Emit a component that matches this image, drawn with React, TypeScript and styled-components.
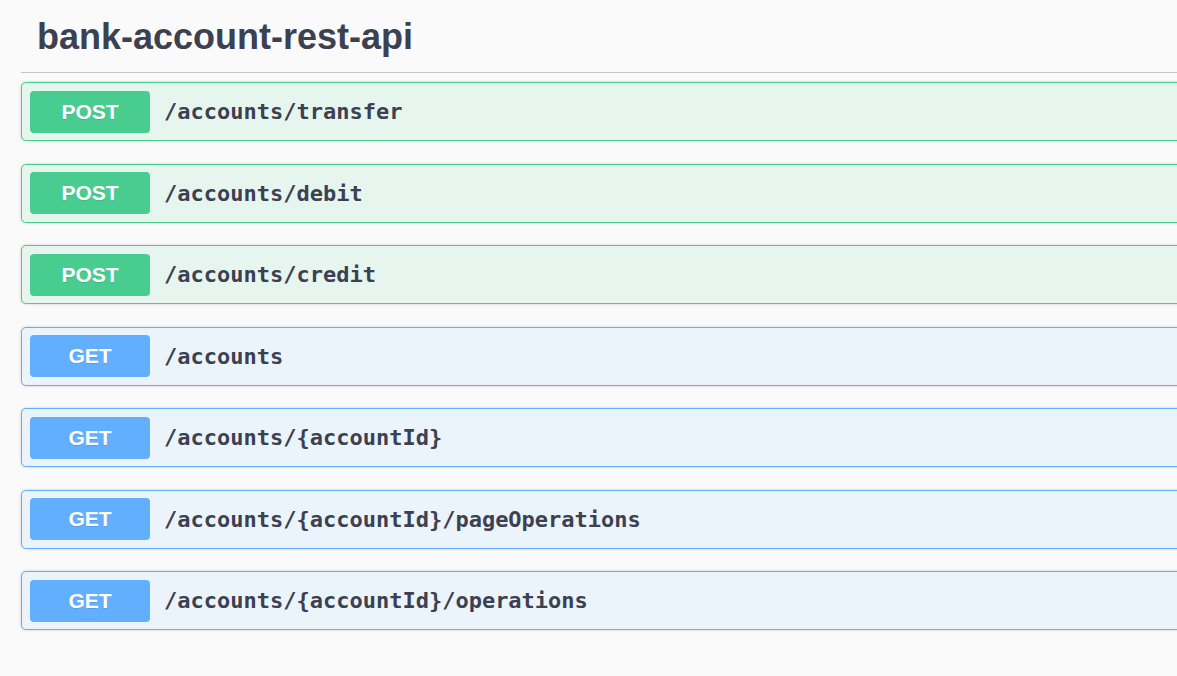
import React from "react";
import styled, { createGlobalStyle } from "styled-components";

const GlobalStyle = createGlobalStyle`
  html, body {
    margin: 0;
    padding: 0;
    background: #fafafa;
    overflow: hidden;
  }
  body {
    font-family: "Liberation Sans", Arial, sans-serif;
  }
`;

const Page = styled.div`
  min-height: 100vh;
  background: #fafafa;
  padding: 0 0 0 21px;
  box-sizing: border-box;
`;

const Section = styled.section`
  width: 1200px;
`;

const Header = styled.div`
  border-bottom: 1px solid #c4c4c4;
  padding: 16px 0 14px 16px;
`;

const Title = styled.h2`
  margin: 0;
  font-family: "Liberation Sans", Arial, sans-serif;
  font-size: 36px;
  font-weight: 700;
  line-height: 42px;
  color: #3b4151;
`;

const List = styled.div`
  display: flex;
  flex-direction: column;
  gap: 22.5px;
  padding-top: 9px;
`;

type Method = "post" | "get";

const palette: Record<Method, { main: string; bg: string }> = {
  post: { main: "#49cc90", bg: "#e7f5ef" },
  get: { main: "#61affe", bg: "#ebf3fb" },
};

const Op = styled.div<{ $m: Method }>`
  display: flex;
  align-items: center;
  height: 59px;
  box-sizing: border-box;
  padding: 0 8px;
  border: 1px solid ${(p) => palette[p.$m].main};
  border-radius: 5px;
  background: ${(p) => palette[p.$m].bg};
  box-shadow: 0 0 3px rgba(0, 0, 0, 0.19);
`;

const Badge = styled.span<{ $m: Method }>`
  display: flex;
  align-items: center;
  justify-content: center;
  width: 120px;
  height: 42px;
  flex: none;
  border-radius: 4px;
  background: ${(p) => palette[p.$m].main};
  color: #fff;
  font-family: "Liberation Sans", Arial, sans-serif;
  font-weight: 700;
  font-size: 21px;
  text-shadow: 0 1px 0 rgba(0, 0, 0, 0.1);
`;

const Path = styled.span`
  padding-left: 14px;
  font-family: "DejaVu Sans Mono", "Liberation Mono", monospace;
  font-weight: 700;
  font-size: 22px;
  color: #3b4151;
`;

const ops: { m: Method; label: string; path: string }[] = [
  { m: "post", label: "POST", path: "/accounts/transfer" },
  { m: "post", label: "POST", path: "/accounts/debit" },
  { m: "post", label: "POST", path: "/accounts/credit" },
  { m: "get", label: "GET", path: "/accounts" },
  { m: "get", label: "GET", path: "/accounts/{accountId}" },
  { m: "get", label: "GET", path: "/accounts/{accountId}/pageOperations" },
  { m: "get", label: "GET", path: "/accounts/{accountId}/operations" },
];

export default function App() {
  return (
    <>
      <GlobalStyle />
      <Page>
        <Section>
          <Header>
            <Title>bank-account-rest-api</Title>
          </Header>
          <List>
            {ops.map((o) => (
              <Op key={o.path} $m={o.m}>
                <Badge $m={o.m}>{o.label}</Badge>
                <Path>{o.path}</Path>
              </Op>
            ))}
          </List>
        </Section>
      </Page>
    </>
  );
}
